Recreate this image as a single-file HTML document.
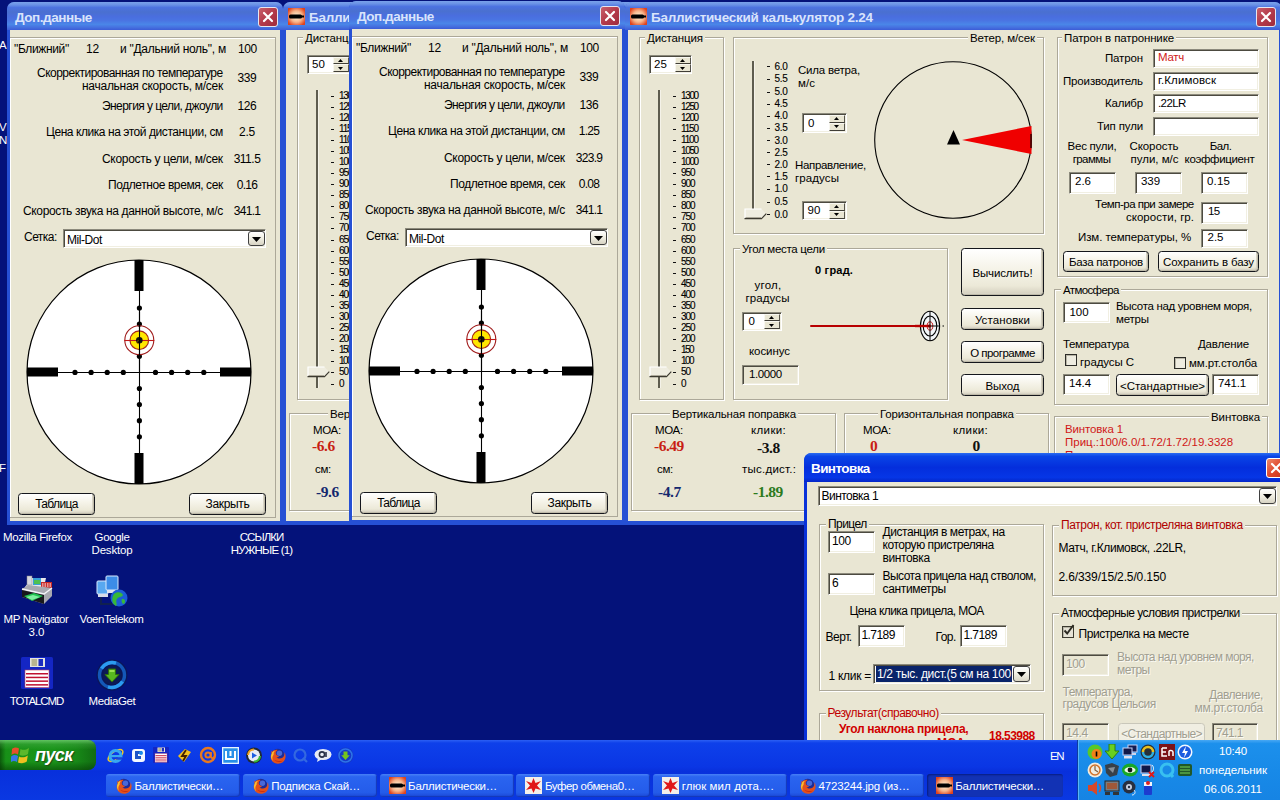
<!DOCTYPE html>
<html lang="ru"><head><meta charset="utf-8"><title>Баллистический калькулятор</title>
<style>
html,body{margin:0;padding:0;background:#04127a;}
#root{position:relative;width:1280px;height:800px;overflow:hidden;background:#04127a;font-family:"Liberation Sans",sans-serif;font-size:11px;color:#000;}
#root div,#root span.x,#root svg{position:absolute;box-sizing:border-box;}
span.x{white-space:nowrap;line-height:20px;height:20px;}
.t{font-size:11.5px;}              /* Tahoma 8pt look */
.tb{font-size:11px;font-weight:bold;}
.ms{font-size:12px;}             /* MS Sans Serif look */
.msb{font-size:12px;font-weight:bold;}
.tick{font-size:10px;font-weight:normal;color:#000;-webkit-text-stroke:0.12px #000;}
.ttl{font-size:13.5px;font-weight:bold;color:#d9e4fb;}
.ttla{font-size:13.5px;font-weight:bold;color:#fff;}
.ser{font-family:"Liberation Serif",serif;font-size:15.5px;font-weight:bold;}
.desk{font-size:11.5px;color:#fff;}
.tsk{font-size:11.5px;color:#fff;}
.start{font-size:18px;font-weight:bold;font-style:italic;color:#fff;text-shadow:1px 1px 1px #1c4a12;}
.winbg{background:#e9e6d3;}
.bord{background:#2650d4;}
.title{background:linear-gradient(to bottom,#7aa2ea 0%,#6a92e6 10%,#4c72e0 20%,#4a70d0 36%,#4a6ede 52%,#4a74e2 66%,#4a86e8 80%,#4672e0 90%,#3c5cd6 100%);border-radius:7px 7px 0 0;}
.titlea{background:linear-gradient(to bottom,#2a6cf2 0%,#0a44e6 12%,#042edc 50%,#0636e6 84%,#0426c8 100%);border-radius:7px 7px 0 0;}
.closei{background:linear-gradient(135deg,#c8606c,#b43a4a 50%,#a02c3c);border:1px solid #e6e6f0;border-radius:3px;}
.closea{background:linear-gradient(135deg,#ee8a6c,#e0482c 50%,#c83018);border:1px solid #fff;border-radius:3px;}
.grp{border:1px solid #aca899;box-shadow:1px 1px 0 #fff, inset 1px 1px 0 #fff;}
.glab{background:#e9e6d3;}
.tbx{background:#fff;border-top:1px solid #8c8a7c;border-left:1px solid #8c8a7c;border-right:1px solid #fff;border-bottom:1px solid #fff;box-shadow:inset 1px 1px 0 #4c4a40, inset -1px -1px 0 #f1efe2;}
.tbxd{background:#e9e6d3;border-top:1px solid #8c8a7c;border-left:1px solid #8c8a7c;border-right:1px solid #fff;border-bottom:1px solid #fff;box-shadow:inset 1px 1px 0 #4c4a40, inset -1px -1px 0 #f1efe2;}
.btn{border:1px solid #14161c;border-radius:3.5px;background:linear-gradient(to bottom,#ffffff 0%,#f6f4ea 40%,#ece9d8 80%,#d2cdbd 100%);box-shadow:inset -1px -1px 0 #bdb9a8, inset -2px -2px 0 #d8d4c6;}
.btnd{border:1px solid #c9c7ba;border-radius:3.5px;background:#f0eee2;}
.ddb{border:1px solid #404040;border-radius:3px;background:linear-gradient(to bottom,#ffffff 0%,#f0eee2 50%,#d8d4c4 100%);}
.chk{background:#eeece0;border:1px solid #2c2c28;box-shadow:inset 1px 1px 0 #b8b5a6;}
.frame3d{border:1px solid #aca899;box-shadow:inset 1px 1px 0 #fff;}
</style></head>
<body><div id="root">
<span id="t1" class="x desk" style="top:35px;left:-1px;">A</span>
<span id="t2" class="x desk" style="top:117px;left:-1px;">V</span>
<span id="t3" class="x desk" style="top:130px;left:-1px;">N</span>
<span id="t4" class="x desk" style="top:458px;left:-1px;">F</span>
<span id="t5" class="x desk" style="top:527px;left:3px;letter-spacing:-0.35px;">Mozilla Firefox</span>
<span id="t6" class="x desk" style="top:527px;left:-88.0px;width:400px;text-align:center;letter-spacing:-0.38px;">Google</span>
<span id="t7" class="x desk" style="top:540px;left:-88.0px;width:400px;text-align:center;letter-spacing:-0.18px;">Desktop</span>
<span id="t8" class="x desk" style="top:527px;left:61.5px;width:400px;text-align:center;letter-spacing:-0.97px;">ССЫЛКИ</span>
<span id="t9" class="x desk" style="top:540px;left:61.5px;width:400px;text-align:center;letter-spacing:-0.80px;">НУЖНЫЕ (1)</span>
<svg style="left:20px;top:575px" width="34" height="33" viewBox="0 0 34 33"><path d="M5 12 L12 3 L26 3 L24 12Z" fill="#e8e8ec"/><rect x="7" y="1" width="5" height="9" fill="#d8d8e0" stroke="#888" stroke-width=".5"/><rect x="13" y="3" width="8" height="7" fill="#38a0d8"/><rect x="14" y="5" width="6" height="4" fill="#50c050"/><rect x="21" y="7" width="11" height="6" fill="#c82828"/><path d="M22 9 H31 M22 11 H31" stroke="#fff" stroke-width="1" stroke-dasharray="1.5 1"/><path d="M2 14 L8 10 L32 13 L32 21 L24 29 L2 22Z" fill="#a8a8b0"/><path d="M2 14 L24 19 L32 13" fill="none" stroke="#f4f4f8" stroke-width="1.5"/><path d="M2 15 L24 20 L24 29 L2 22Z" fill="#18181c"/><path d="M4 21 L14 18 L23 21 L12 26Z" fill="#20c050"/><path d="M6 22 L13 20 L20 22 L12 25Z" fill="#80f0a0"/></svg>
<span id="t10" class="x desk" style="top:609px;left:-164.0px;width:400px;text-align:center;letter-spacing:-0.39px;">MP Navigator</span>
<span id="t11" class="x desk" style="top:622px;left:-163.5px;width:400px;text-align:center;">3.0</span>
<svg style="left:95px;top:575px" width="34" height="34" viewBox="0 0 34 34"><rect x="2" y="6" width="11" height="13" rx="1" fill="#58a8f0" stroke="#d8e8fc" stroke-width="1"/><rect x="3" y="19" width="10" height="3" fill="#d8dce8"/><rect x="11" y="1" width="12" height="14" rx="1" fill="#3c8ce8" stroke="#d8e8fc" stroke-width="1"/><rect x="12" y="15" width="10" height="3" fill="#e0e4f0"/><path d="M6 22 V29 H18" fill="none" stroke="#102050" stroke-width="2"/><circle cx="24" cy="23" r="8.5" fill="#1c5cd8"/><path d="M19 19 C22 16,27 17,28 20 C26 23,24 21,22 24 C20 27,23 29,21 31 C17 29,16 23,19 19Z" fill="#38b838"/><path d="M27 24 C30 24,31 26,29 29 C27 29,26 26,27 24Z" fill="#38b838"/></svg>
<span id="t12" class="x desk" style="top:609px;left:-88.5px;width:400px;text-align:center;letter-spacing:-0.48px;">VoenTelekom</span>
<svg style="left:21px;top:657px" width="32" height="32" viewBox="0 0 32 32"><rect x="0" y="0" width="32" height="32" rx="1.5" fill="#1426c4"/><rect x="9" y="1" width="15" height="9" fill="#e4e4dc"/><rect x="17.5" y="2" width="4.5" height="7" fill="#1c2cc0"/><rect x="10.5" y="2" width="5.5" height="7" fill="#b8b490"/><rect x="4" y="13" width="24" height="17.5" fill="#fff" stroke="#c04060" stroke-width="0.6"/><rect x="5" y="16" width="22" height="1.5" fill="#c01030"/><rect x="5" y="19.7" width="22" height="1.5" fill="#c01030"/><rect x="5" y="23.4" width="22" height="1.5" fill="#c01030"/><rect x="5" y="27.1" width="22" height="1.5" fill="#c01030"/></svg>
<span id="t13" class="x desk" style="top:691px;left:-163.5px;width:400px;text-align:center;letter-spacing:-1.09px;">TOTALCMD</span>
<svg style="left:96px;top:659px" width="32" height="32" viewBox="0 0 32 32"><circle cx="16" cy="16" r="15.5" fill="#0a1658"/><circle cx="16" cy="16" r="12.5" fill="none" stroke="#1458b8" stroke-width="3.4"/><path d="M5.5 9.5 A12.5 12.5 0 0 1 20 4.2" fill="none" stroke="#2c9cf0" stroke-width="3.4"/><path d="M26.5 22.5 A12.5 12.5 0 0 1 12 27.8" fill="none" stroke="#2c9cf0" stroke-width="3.4"/><circle cx="16" cy="16" r="9.5" fill="#0c1a54"/><path d="M12.5 10 H19.5 V15.5 H23 L16 23 L9 15.5 H12.5Z" fill="#58b820" stroke="#2c6c0c" stroke-width="1"/><path d="M13.5 11 H18.5 V13 H13.5Z" fill="#98e050"/></svg>
<span id="t14" class="x desk" style="top:691px;left:-88.0px;width:400px;text-align:center;letter-spacing:-0.38px;">MediaGet</span>
<div class="" style="left:7px;top:2px;width:276px;height:522.5px;background:#2650d4;border-radius:8px 8px 0 0;"></div>
<div class="title" style="left:7px;top:2px;width:276px;height:28px;"></div>
<div class="winbg" style="left:10px;top:29.5px;width:270px;height:491.0px;"></div>
<div class="closei" style="left:257.5px;top:6.5px;width:20.5px;height:20.5px;"><svg width="18" height="18" viewBox="0 0 18 18" style="left:0;top:0"><path d="M5 5 L13 13 M13 5 L5 13" stroke="#fff" stroke-width="2.2" stroke-linecap="round"/></svg></div>
<span id="t15" class="x ttl" style="top:8px;left:15px;letter-spacing:-0.46px;">Доп.данные</span>
<div class="frame3d" style="left:10px;top:37px;width:266px;height:480.5px;border-left:none;"></div>
<span id="t16" class="x ms" style="top:39px;left:14px;letter-spacing:-0.36px;">"Ближний"</span>
<span id="t17" class="x ms" style="top:39px;left:86px;letter-spacing:-0.24px;">12</span>
<span id="t18" class="x ms" style="top:39px;left:120px;letter-spacing:-0.28px;">и "Дальний ноль", м</span>
<span id="t19" class="x ms" style="top:39px;left:238px;letter-spacing:-0.41px;">100</span>
<span id="t20" class="x ms" style="top:63px;left:37px;letter-spacing:-0.52px;">Скорректированная по температуре</span>
<span id="t21" class="x ms" style="top:76px;left:82px;letter-spacing:-0.27px;">начальная скорость, м/сек</span>
<span id="t22" class="x ms" style="top:67.5px;left:47.0px;width:400px;text-align:center;letter-spacing:-0.41px;">339</span>
<span id="t23" class="x ms" style="top:96px;left:47.0px;width:400px;text-align:center;letter-spacing:-0.41px;">126</span>
<span id="t24" class="x ms" style="top:96px;left:102px;letter-spacing:-0.57px;">Энергия у цели, джоули</span>
<span id="t25" class="x ms" style="top:122px;left:47.0px;width:400px;text-align:center;letter-spacing:-0.28px;">2.5</span>
<span id="t26" class="x ms" style="top:122px;left:46px;letter-spacing:-0.44px;">Цена клика на этой дистанции, см</span>
<span id="t27" class="x ms" style="top:149px;left:47.0px;width:400px;text-align:center;letter-spacing:-0.48px;">311.5</span>
<span id="t28" class="x ms" style="top:149px;left:102px;letter-spacing:-0.30px;">Скорость у цели, м/сек</span>
<span id="t29" class="x ms" style="top:175px;left:47.0px;width:400px;text-align:center;letter-spacing:-0.67px;">0.16</span>
<span id="t30" class="x ms" style="top:175px;left:108px;letter-spacing:-0.42px;">Подлетное время, сек</span>
<span id="t31" class="x ms" style="top:201px;left:47.0px;width:400px;text-align:center;letter-spacing:-0.67px;">341.1</span>
<span id="t32" class="x ms" style="top:201px;left:23px;letter-spacing:-0.35px;">Скорость звука на данной высоте, м/с</span>
<span id="t33" class="x ms" style="top:227px;left:24px;letter-spacing:-0.54px;">Сетка:</span>
<div class="tbx" style="left:63px;top:229px;width:203px;height:19px;"></div>
<div class="ddb" style="left:248px;top:231px;width:17px;height:15px;"><svg width="9" height="5" style="left:3px;top:5px"><path d="M0 0 L9 0 L4.5 5Z" fill="#000"/></svg></div>
<span id="t34" class="x ms" style="top:229.5px;left:67px;letter-spacing:-0.46px;">Mil-Dot</span>
<svg style="left:25px;top:258px" width="228" height="228" viewBox="-114 -114 228 228"><circle r="112" fill="#fff" stroke="#000" stroke-width="1.2"/><path d="M-112 0.5 H112 M0.5 -112 V112" stroke="#000" stroke-width="1.1"/><rect x="-4.5" y="-112" width="9" height="31" fill="#000"/><rect x="-4.5" y="81" width="9" height="31" fill="#000"/><rect x="-112" y="-4.5" width="31" height="9" fill="#000"/><rect x="81" y="-4.5" width="31" height="9" fill="#000"/><circle cx="16.5" cy="0.4" r="2.6" fill="#000"/><circle cx="-15.700000000000001" cy="0.4" r="2.6" fill="#000"/><circle cx="0.4" cy="16.5" r="2.6" fill="#000"/><circle cx="0.4" cy="-15.700000000000001" r="2.6" fill="#000"/><circle cx="32.6" cy="0.4" r="2.6" fill="#000"/><circle cx="-31.800000000000004" cy="0.4" r="2.6" fill="#000"/><circle cx="0.4" cy="32.6" r="2.6" fill="#000"/><circle cx="0.4" cy="-31.800000000000004" r="2.6" fill="#000"/><circle cx="48.7" cy="0.4" r="2.6" fill="#000"/><circle cx="-47.900000000000006" cy="0.4" r="2.6" fill="#000"/><circle cx="0.4" cy="48.7" r="2.6" fill="#000"/><circle cx="0.4" cy="-47.900000000000006" r="2.6" fill="#000"/><circle cx="64.80000000000001" cy="0.4" r="2.6" fill="#000"/><circle cx="-64.0" cy="0.4" r="2.6" fill="#000"/><circle cx="0.4" cy="64.80000000000001" r="2.6" fill="#000"/><circle cx="0.4" cy="-64.0" r="2.6" fill="#000"/><g transform="translate(0.3,-31.8)"><circle r="14.5" fill="none" stroke="#a01c1c" stroke-width="1.1"/><circle r="9.3" fill="#ffe800" stroke="#a82818" stroke-width="1.2"/><path d="M-15 0.3 H15" stroke="#c01818" stroke-width="1.1"/><circle r="3.3" fill="#101010"/><circle cx="-1" cy="2" r="1.5" fill="none" stroke="#a06000" stroke-width="0.7"/></g><path d="M0.5 -60 V0" stroke="#000" stroke-width="1.1"/></svg>
<div class="btn" style="left:18px;top:492.5px;width:77px;height:22.5px;"></div>
<span id="t35" class="x ms" style="top:494.25px;left:-143.5px;width:400px;text-align:center;letter-spacing:-0.62px;">Таблица</span>
<div class="btn" style="left:189px;top:492.5px;width:77px;height:22.5px;"></div>
<span id="t36" class="x ms" style="top:494.25px;left:27.5px;width:400px;text-align:center;letter-spacing:-0.34px;">Закрыть</span>
<div class="" style="left:283px;top:2px;width:657px;height:522.5px;background:#2650d4;border-radius:8px 8px 0 0;"></div>
<div class="title" style="left:283px;top:2px;width:657px;height:28px;"></div>
<div class="winbg" style="left:286px;top:29.5px;width:651px;height:491.0px;"></div>
<svg style="left:288px;top:7.5px" width="17" height="17" viewBox="0 0 17 17"><defs><radialGradient id="ai" cx="50%" cy="50%" r="60%"><stop offset="0" stop-color="#fff4d8"/><stop offset="0.55" stop-color="#f6b48a"/><stop offset="1" stop-color="#e0421c"/></radialGradient></defs><rect width="17" height="17" fill="url(#ai)"/><rect x="1" y="6.5" width="13" height="4" rx="1.5" fill="#000"/><rect x="12" y="7.5" width="4" height="2" fill="#000"/></svg>
<div class="closei" style="left:913.5px;top:6.5px;width:20.5px;height:20.5px;"><svg width="18" height="18" viewBox="0 0 18 18" style="left:0;top:0"><path d="M5 5 L13 13 M13 5 L5 13" stroke="#fff" stroke-width="2.2" stroke-linecap="round"/></svg></div>
<span id="t37" class="x ttl" style="top:7.5px;left:309px;letter-spacing:-0.25px;">Баллистический калькулятор 2.24</span>
<div class="grp" style="left:297px;top:37px;width:85px;height:363px;"></div>
<div class="glab" style="left:303px;top:31px;width:60px;height:13px;"></div>
<span id="t38" class="x t" style="top:27.6px;left:305px;letter-spacing:-0.13px;">Дистанция</span>
<div class="tbx" style="left:306.5px;top:54.5px;width:43.5px;height:19.0px;"></div>
<div class="" style="left:332.5px;top:56.5px;width:16px;height:7.75px;background:#e9e6d3;border-top:1px solid #f8f7f0;border-left:1px solid #f8f7f0;border-right:1px solid #55534a;border-bottom:1.3px solid #403e36;"></div>
<svg style="left:337.5px;top:58.575px" width="5" height="3"><path d="M0 3 L2.5 0 L5 3Z" fill="#000"/></svg>
<div class="" style="left:332.5px;top:64.25px;width:16px;height:7.75px;background:#e9e6d3;border-top:1px solid #f8f7f0;border-left:1px solid #f8f7f0;border-right:1px solid #55534a;border-bottom:1.3px solid #403e36;"></div>
<svg style="left:337.5px;top:66.525px" width="5" height="3"><path d="M0 0 L2.5 3 L5 0Z" fill="#000"/></svg>
<span id="t39" class="x t" style="top:54.0px;left:312px;letter-spacing:0.14px;">50</span>
<div class="" style="left:316.3px;top:90px;width:3px;height:298px;background:#5e5c4e;border-right:1px solid #f4f2e8;"></div>
<div class="" style="left:331.29999999999995px;top:95.5px;width:3.2px;height:1.4px;background:#111;"></div>
<span id="t40" class="x tick" style="top:85.7px;left:339px;letter-spacing:-1.36px;">1300</span>
<div class="" style="left:331.29999999999995px;top:106.5px;width:3.2px;height:1.4px;background:#111;"></div>
<span id="t41" class="x tick" style="top:96.7px;left:339px;letter-spacing:-1.36px;">1250</span>
<div class="" style="left:331.29999999999995px;top:117.5px;width:3.2px;height:1.4px;background:#111;"></div>
<span id="t42" class="x tick" style="top:107.7px;left:339px;letter-spacing:-1.36px;">1200</span>
<div class="" style="left:331.29999999999995px;top:128.5px;width:3.2px;height:1.4px;background:#111;"></div>
<span id="t43" class="x tick" style="top:118.69999999999999px;left:339px;letter-spacing:-1.15px;">1150</span>
<div class="" style="left:331.29999999999995px;top:139.5px;width:3.2px;height:1.4px;background:#111;"></div>
<span id="t44" class="x tick" style="top:129.7px;left:339px;letter-spacing:-1.15px;">1100</span>
<div class="" style="left:331.29999999999995px;top:150.5px;width:3.2px;height:1.4px;background:#111;"></div>
<span id="t45" class="x tick" style="top:140.7px;left:339px;letter-spacing:-1.36px;">1050</span>
<div class="" style="left:331.29999999999995px;top:161.5px;width:3.2px;height:1.4px;background:#111;"></div>
<span id="t46" class="x tick" style="top:151.7px;left:339px;letter-spacing:-1.36px;">1000</span>
<div class="" style="left:331.29999999999995px;top:172.5px;width:3.2px;height:1.4px;background:#111;"></div>
<span id="t47" class="x tick" style="top:162.7px;left:339px;letter-spacing:-1.07px;">950</span>
<div class="" style="left:331.29999999999995px;top:183.5px;width:3.2px;height:1.4px;background:#111;"></div>
<span id="t48" class="x tick" style="top:173.7px;left:339px;letter-spacing:-1.07px;">900</span>
<div class="" style="left:331.29999999999995px;top:194.5px;width:3.2px;height:1.4px;background:#111;"></div>
<span id="t49" class="x tick" style="top:184.7px;left:339px;letter-spacing:-1.07px;">850</span>
<div class="" style="left:331.29999999999995px;top:205.5px;width:3.2px;height:1.4px;background:#111;"></div>
<span id="t50" class="x tick" style="top:195.7px;left:339px;letter-spacing:-1.07px;">800</span>
<div class="" style="left:331.29999999999995px;top:216.5px;width:3.2px;height:1.4px;background:#111;"></div>
<span id="t51" class="x tick" style="top:206.7px;left:339px;letter-spacing:-1.07px;">750</span>
<div class="" style="left:331.29999999999995px;top:227.5px;width:3.2px;height:1.4px;background:#111;"></div>
<span id="t52" class="x tick" style="top:217.7px;left:339px;letter-spacing:-1.07px;">700</span>
<div class="" style="left:331.29999999999995px;top:239.5px;width:3.2px;height:1.4px;background:#111;"></div>
<span id="t53" class="x tick" style="top:229.7px;left:339px;letter-spacing:-1.07px;">650</span>
<div class="" style="left:331.29999999999995px;top:250.5px;width:3.2px;height:1.4px;background:#111;"></div>
<span id="t54" class="x tick" style="top:240.7px;left:339px;letter-spacing:-1.07px;">600</span>
<div class="" style="left:331.29999999999995px;top:261.5px;width:3.2px;height:1.4px;background:#111;"></div>
<span id="t55" class="x tick" style="top:251.7px;left:339px;letter-spacing:-1.07px;">550</span>
<div class="" style="left:331.29999999999995px;top:272.5px;width:3.2px;height:1.4px;background:#111;"></div>
<span id="t56" class="x tick" style="top:262.7px;left:339px;letter-spacing:-1.07px;">500</span>
<div class="" style="left:331.29999999999995px;top:283.5px;width:3.2px;height:1.4px;background:#111;"></div>
<span id="t57" class="x tick" style="top:273.7px;left:339px;letter-spacing:-1.07px;">450</span>
<div class="" style="left:331.29999999999995px;top:294.5px;width:3.2px;height:1.4px;background:#111;"></div>
<span id="t58" class="x tick" style="top:284.7px;left:339px;letter-spacing:-1.07px;">400</span>
<div class="" style="left:331.29999999999995px;top:305.5px;width:3.2px;height:1.4px;background:#111;"></div>
<span id="t59" class="x tick" style="top:295.7px;left:339px;letter-spacing:-1.07px;">350</span>
<div class="" style="left:331.29999999999995px;top:316.5px;width:3.2px;height:1.4px;background:#111;"></div>
<span id="t60" class="x tick" style="top:306.7px;left:339px;letter-spacing:-1.07px;">300</span>
<div class="" style="left:331.29999999999995px;top:327.5px;width:3.2px;height:1.4px;background:#111;"></div>
<span id="t61" class="x tick" style="top:317.7px;left:339px;letter-spacing:-1.07px;">250</span>
<div class="" style="left:331.29999999999995px;top:338.5px;width:3.2px;height:1.4px;background:#111;"></div>
<span id="t62" class="x tick" style="top:328.7px;left:339px;letter-spacing:-1.07px;">200</span>
<div class="" style="left:331.29999999999995px;top:349.5px;width:3.2px;height:1.4px;background:#111;"></div>
<span id="t63" class="x tick" style="top:339.7px;left:339px;letter-spacing:-1.55px;">150</span>
<div class="" style="left:331.29999999999995px;top:360.5px;width:3.2px;height:1.4px;background:#111;"></div>
<span id="t64" class="x tick" style="top:350.7px;left:339px;letter-spacing:-1.55px;">100</span>
<div class="" style="left:331.29999999999995px;top:371.5px;width:3.2px;height:1.4px;background:#111;"></div>
<span id="t65" class="x tick" style="top:361.7px;left:339px;letter-spacing:-1.08px;">50</span>
<div class="" style="left:331.29999999999995px;top:383.5px;width:3.2px;height:1.4px;background:#111;"></div>
<span id="t66" class="x tick" style="top:374.0px;left:339px;">0</span>
<svg style="left:307px;top:365.5px" width="24" height="13" viewBox="0 0 24 13"><path d="M1 1 H17.5 L22 5.8 L17.5 10.5 H1 Z" fill="#efede0"/><path d="M1 10.5 V1 H17.5" fill="none" stroke="#fff" stroke-width="1.2"/><path d="M0.5 10.6 H17.5 L22.3 5.6" fill="none" stroke="#3c3a30" stroke-width="1.2"/><path d="M1.5 9.5 H17" fill="none" stroke="#aca899" stroke-width="1"/></svg>
<div class="grp" style="left:289px;top:413px;width:205px;height:98px;"></div>
<div class="glab" style="left:328px;top:407px;width:128px;height:13px;"></div>
<span id="t67" class="x t" style="top:403.6px;left:330px;letter-spacing:-0.19px;">Вертикальная поправка</span>
<span id="t68" class="x t" style="top:420px;left:313px;letter-spacing:-0.33px;">МОА:</span>
<span id="t69" class="x ser" style="top:436px;left:312px;letter-spacing:-0.44px;color:#c81e14;">-6.6</span>
<span id="t70" class="x t" style="top:459px;left:315px;letter-spacing:-0.34px;">см:</span>
<span id="t71" class="x ser" style="top:481.5px;left:316px;letter-spacing:-0.44px;color:#14286e;">-9.6</span>
<div class="" style="left:349px;top:1px;width:276px;height:522.5px;background:#2650d4;border-radius:8px 8px 0 0;"></div>
<div class="title" style="left:349px;top:1px;width:276px;height:28px;"></div>
<div class="winbg" style="left:352px;top:28.5px;width:270px;height:491.0px;"></div>
<div class="closei" style="left:599.5px;top:5.5px;width:20.5px;height:20.5px;"><svg width="18" height="18" viewBox="0 0 18 18" style="left:0;top:0"><path d="M5 5 L13 13 M13 5 L5 13" stroke="#fff" stroke-width="2.2" stroke-linecap="round"/></svg></div>
<span id="t72" class="x ttl" style="top:7px;left:357px;letter-spacing:-0.46px;">Доп.данные</span>
<div class="frame3d" style="left:352px;top:36px;width:266px;height:480.5px;border-left:none;"></div>
<span id="t73" class="x ms" style="top:38px;left:356px;letter-spacing:-0.36px;">"Ближний"</span>
<span id="t74" class="x ms" style="top:38px;left:428px;letter-spacing:-0.24px;">12</span>
<span id="t75" class="x ms" style="top:38px;left:462px;letter-spacing:-0.28px;">и "Дальний ноль", м</span>
<span id="t76" class="x ms" style="top:38px;left:580px;letter-spacing:-0.41px;">100</span>
<span id="t77" class="x ms" style="top:62px;left:379px;letter-spacing:-0.52px;">Скорректированная по температуре</span>
<span id="t78" class="x ms" style="top:75px;left:424px;letter-spacing:-0.27px;">начальная скорость, м/сек</span>
<span id="t79" class="x ms" style="top:66.5px;left:389.0px;width:400px;text-align:center;letter-spacing:-0.41px;">339</span>
<span id="t80" class="x ms" style="top:95px;left:389.0px;width:400px;text-align:center;letter-spacing:-0.41px;">136</span>
<span id="t81" class="x ms" style="top:95px;left:444px;letter-spacing:-0.57px;">Энергия у цели, джоули</span>
<span id="t82" class="x ms" style="top:121px;left:389.0px;width:400px;text-align:center;letter-spacing:-0.67px;">1.25</span>
<span id="t83" class="x ms" style="top:121px;left:388px;letter-spacing:-0.44px;">Цена клика на этой дистанции, см</span>
<span id="t84" class="x ms" style="top:148px;left:389.0px;width:400px;text-align:center;letter-spacing:-0.67px;">323.9</span>
<span id="t85" class="x ms" style="top:148px;left:444px;letter-spacing:-0.30px;">Скорость у цели, м/сек</span>
<span id="t86" class="x ms" style="top:174px;left:389.0px;width:400px;text-align:center;letter-spacing:-0.67px;">0.08</span>
<span id="t87" class="x ms" style="top:174px;left:450px;letter-spacing:-0.42px;">Подлетное время, сек</span>
<span id="t88" class="x ms" style="top:200px;left:389.0px;width:400px;text-align:center;letter-spacing:-0.67px;">341.1</span>
<span id="t89" class="x ms" style="top:200px;left:365px;letter-spacing:-0.35px;">Скорость звука на данной высоте, м/с</span>
<span id="t90" class="x ms" style="top:226px;left:366px;letter-spacing:-0.54px;">Сетка:</span>
<div class="tbx" style="left:405px;top:228px;width:203px;height:19px;"></div>
<div class="ddb" style="left:590px;top:230px;width:17px;height:15px;"><svg width="9" height="5" style="left:3px;top:5px"><path d="M0 0 L9 0 L4.5 5Z" fill="#000"/></svg></div>
<span id="t91" class="x ms" style="top:228.5px;left:409px;letter-spacing:-0.46px;">Mil-Dot</span>
<svg style="left:367px;top:257px" width="228" height="228" viewBox="-114 -114 228 228"><circle r="112" fill="#fff" stroke="#000" stroke-width="1.2"/><path d="M-112 0.5 H112 M0.5 -112 V112" stroke="#000" stroke-width="1.1"/><rect x="-4.5" y="-112" width="9" height="31" fill="#000"/><rect x="-4.5" y="81" width="9" height="31" fill="#000"/><rect x="-112" y="-4.5" width="31" height="9" fill="#000"/><rect x="81" y="-4.5" width="31" height="9" fill="#000"/><circle cx="16.5" cy="0.4" r="2.6" fill="#000"/><circle cx="-15.700000000000001" cy="0.4" r="2.6" fill="#000"/><circle cx="0.4" cy="16.5" r="2.6" fill="#000"/><circle cx="0.4" cy="-15.700000000000001" r="2.6" fill="#000"/><circle cx="32.6" cy="0.4" r="2.6" fill="#000"/><circle cx="-31.800000000000004" cy="0.4" r="2.6" fill="#000"/><circle cx="0.4" cy="32.6" r="2.6" fill="#000"/><circle cx="0.4" cy="-31.800000000000004" r="2.6" fill="#000"/><circle cx="48.7" cy="0.4" r="2.6" fill="#000"/><circle cx="-47.900000000000006" cy="0.4" r="2.6" fill="#000"/><circle cx="0.4" cy="48.7" r="2.6" fill="#000"/><circle cx="0.4" cy="-47.900000000000006" r="2.6" fill="#000"/><circle cx="64.80000000000001" cy="0.4" r="2.6" fill="#000"/><circle cx="-64.0" cy="0.4" r="2.6" fill="#000"/><circle cx="0.4" cy="64.80000000000001" r="2.6" fill="#000"/><circle cx="0.4" cy="-64.0" r="2.6" fill="#000"/><g transform="translate(0.3,-31.8)"><circle r="14.5" fill="none" stroke="#a01c1c" stroke-width="1.1"/><circle r="9.3" fill="#ffe800" stroke="#a82818" stroke-width="1.2"/><path d="M-15 0.3 H15" stroke="#c01818" stroke-width="1.1"/><circle r="3.3" fill="#101010"/><circle cx="-1" cy="2" r="1.5" fill="none" stroke="#a06000" stroke-width="0.7"/></g><path d="M0.5 -60 V0" stroke="#000" stroke-width="1.1"/></svg>
<div class="btn" style="left:360px;top:491.5px;width:77px;height:22.5px;"></div>
<span id="t92" class="x ms" style="top:493.25px;left:198.5px;width:400px;text-align:center;letter-spacing:-0.62px;">Таблица</span>
<div class="btn" style="left:531px;top:491.5px;width:77px;height:22.5px;"></div>
<span id="t93" class="x ms" style="top:493.25px;left:369.5px;width:400px;text-align:center;letter-spacing:-0.34px;">Закрыть</span>
<div class="" style="left:625px;top:2px;width:657px;height:522.5px;background:#2650d4;border-radius:8px 8px 0 0;"></div>
<div class="title" style="left:625px;top:2px;width:657px;height:28px;"></div>
<div class="winbg" style="left:628px;top:29.5px;width:651px;height:491.0px;"></div>
<svg style="left:630px;top:7.5px" width="17" height="17" viewBox="0 0 17 17"><defs><radialGradient id="ai" cx="50%" cy="50%" r="60%"><stop offset="0" stop-color="#fff4d8"/><stop offset="0.55" stop-color="#f6b48a"/><stop offset="1" stop-color="#e0421c"/></radialGradient></defs><rect width="17" height="17" fill="url(#ai)"/><rect x="1" y="6.5" width="13" height="4" rx="1.5" fill="#000"/><rect x="12" y="7.5" width="4" height="2" fill="#000"/></svg>
<div class="closei" style="left:1255.5px;top:6.5px;width:20.5px;height:20.5px;"><svg width="18" height="18" viewBox="0 0 18 18" style="left:0;top:0"><path d="M5 5 L13 13 M13 5 L5 13" stroke="#fff" stroke-width="2.2" stroke-linecap="round"/></svg></div>
<span id="t94" class="x ttl" style="top:7.5px;left:651px;letter-spacing:-0.25px;">Баллистический калькулятор 2.24</span>
<div class="grp" style="left:639px;top:37px;width:85px;height:363px;"></div>
<div class="glab" style="left:645px;top:31px;width:60px;height:13px;"></div>
<span id="t95" class="x t" style="top:27.6px;left:647px;letter-spacing:-0.13px;">Дистанция</span>
<div class="tbx" style="left:648.5px;top:54.5px;width:43.5px;height:19.0px;"></div>
<div class="" style="left:674.5px;top:56.5px;width:16px;height:7.75px;background:#e9e6d3;border-top:1px solid #f8f7f0;border-left:1px solid #f8f7f0;border-right:1px solid #55534a;border-bottom:1.3px solid #403e36;"></div>
<svg style="left:679.5px;top:58.575px" width="5" height="3"><path d="M0 3 L2.5 0 L5 3Z" fill="#000"/></svg>
<div class="" style="left:674.5px;top:64.25px;width:16px;height:7.75px;background:#e9e6d3;border-top:1px solid #f8f7f0;border-left:1px solid #f8f7f0;border-right:1px solid #55534a;border-bottom:1.3px solid #403e36;"></div>
<svg style="left:679.5px;top:66.525px" width="5" height="3"><path d="M0 0 L2.5 3 L5 0Z" fill="#000"/></svg>
<span id="t96" class="x t" style="top:54.0px;left:654px;letter-spacing:0.14px;">25</span>
<div class="" style="left:658.3px;top:90px;width:3px;height:298px;background:#5e5c4e;border-right:1px solid #f4f2e8;"></div>
<div class="" style="left:673.3px;top:95.5px;width:3.2px;height:1.4px;background:#111;"></div>
<span id="t97" class="x tick" style="top:85.7px;left:681px;letter-spacing:-1.36px;">1300</span>
<div class="" style="left:673.3px;top:106.5px;width:3.2px;height:1.4px;background:#111;"></div>
<span id="t98" class="x tick" style="top:96.7px;left:681px;letter-spacing:-1.36px;">1250</span>
<div class="" style="left:673.3px;top:117.5px;width:3.2px;height:1.4px;background:#111;"></div>
<span id="t99" class="x tick" style="top:107.7px;left:681px;letter-spacing:-1.36px;">1200</span>
<div class="" style="left:673.3px;top:128.5px;width:3.2px;height:1.4px;background:#111;"></div>
<span id="t100" class="x tick" style="top:118.69999999999999px;left:681px;letter-spacing:-1.15px;">1150</span>
<div class="" style="left:673.3px;top:139.5px;width:3.2px;height:1.4px;background:#111;"></div>
<span id="t101" class="x tick" style="top:129.7px;left:681px;letter-spacing:-1.15px;">1100</span>
<div class="" style="left:673.3px;top:150.5px;width:3.2px;height:1.4px;background:#111;"></div>
<span id="t102" class="x tick" style="top:140.7px;left:681px;letter-spacing:-1.36px;">1050</span>
<div class="" style="left:673.3px;top:161.5px;width:3.2px;height:1.4px;background:#111;"></div>
<span id="t103" class="x tick" style="top:151.7px;left:681px;letter-spacing:-1.36px;">1000</span>
<div class="" style="left:673.3px;top:172.5px;width:3.2px;height:1.4px;background:#111;"></div>
<span id="t104" class="x tick" style="top:162.7px;left:681px;letter-spacing:-1.07px;">950</span>
<div class="" style="left:673.3px;top:183.5px;width:3.2px;height:1.4px;background:#111;"></div>
<span id="t105" class="x tick" style="top:173.7px;left:681px;letter-spacing:-1.07px;">900</span>
<div class="" style="left:673.3px;top:194.5px;width:3.2px;height:1.4px;background:#111;"></div>
<span id="t106" class="x tick" style="top:184.7px;left:681px;letter-spacing:-1.07px;">850</span>
<div class="" style="left:673.3px;top:205.5px;width:3.2px;height:1.4px;background:#111;"></div>
<span id="t107" class="x tick" style="top:195.7px;left:681px;letter-spacing:-1.07px;">800</span>
<div class="" style="left:673.3px;top:216.5px;width:3.2px;height:1.4px;background:#111;"></div>
<span id="t108" class="x tick" style="top:206.7px;left:681px;letter-spacing:-1.07px;">750</span>
<div class="" style="left:673.3px;top:227.5px;width:3.2px;height:1.4px;background:#111;"></div>
<span id="t109" class="x tick" style="top:217.7px;left:681px;letter-spacing:-1.07px;">700</span>
<div class="" style="left:673.3px;top:239.5px;width:3.2px;height:1.4px;background:#111;"></div>
<span id="t110" class="x tick" style="top:229.7px;left:681px;letter-spacing:-1.07px;">650</span>
<div class="" style="left:673.3px;top:250.5px;width:3.2px;height:1.4px;background:#111;"></div>
<span id="t111" class="x tick" style="top:240.7px;left:681px;letter-spacing:-1.07px;">600</span>
<div class="" style="left:673.3px;top:261.5px;width:3.2px;height:1.4px;background:#111;"></div>
<span id="t112" class="x tick" style="top:251.7px;left:681px;letter-spacing:-1.07px;">550</span>
<div class="" style="left:673.3px;top:272.5px;width:3.2px;height:1.4px;background:#111;"></div>
<span id="t113" class="x tick" style="top:262.7px;left:681px;letter-spacing:-1.07px;">500</span>
<div class="" style="left:673.3px;top:283.5px;width:3.2px;height:1.4px;background:#111;"></div>
<span id="t114" class="x tick" style="top:273.7px;left:681px;letter-spacing:-1.07px;">450</span>
<div class="" style="left:673.3px;top:294.5px;width:3.2px;height:1.4px;background:#111;"></div>
<span id="t115" class="x tick" style="top:284.7px;left:681px;letter-spacing:-1.07px;">400</span>
<div class="" style="left:673.3px;top:305.5px;width:3.2px;height:1.4px;background:#111;"></div>
<span id="t116" class="x tick" style="top:295.7px;left:681px;letter-spacing:-1.07px;">350</span>
<div class="" style="left:673.3px;top:316.5px;width:3.2px;height:1.4px;background:#111;"></div>
<span id="t117" class="x tick" style="top:306.7px;left:681px;letter-spacing:-1.07px;">300</span>
<div class="" style="left:673.3px;top:327.5px;width:3.2px;height:1.4px;background:#111;"></div>
<span id="t118" class="x tick" style="top:317.7px;left:681px;letter-spacing:-1.07px;">250</span>
<div class="" style="left:673.3px;top:338.5px;width:3.2px;height:1.4px;background:#111;"></div>
<span id="t119" class="x tick" style="top:328.7px;left:681px;letter-spacing:-1.07px;">200</span>
<div class="" style="left:673.3px;top:349.5px;width:3.2px;height:1.4px;background:#111;"></div>
<span id="t120" class="x tick" style="top:339.7px;left:681px;letter-spacing:-1.56px;">150</span>
<div class="" style="left:673.3px;top:360.5px;width:3.2px;height:1.4px;background:#111;"></div>
<span id="t121" class="x tick" style="top:350.7px;left:681px;letter-spacing:-1.56px;">100</span>
<div class="" style="left:673.3px;top:371.5px;width:3.2px;height:1.4px;background:#111;"></div>
<span id="t122" class="x tick" style="top:361.7px;left:681px;letter-spacing:-1.08px;">50</span>
<div class="" style="left:673.3px;top:383.5px;width:3.2px;height:1.4px;background:#111;"></div>
<span id="t123" class="x tick" style="top:374.0px;left:681px;">0</span>
<svg style="left:649px;top:365.5px" width="24" height="13" viewBox="0 0 24 13"><path d="M1 1 H17.5 L22 5.8 L17.5 10.5 H1 Z" fill="#efede0"/><path d="M1 10.5 V1 H17.5" fill="none" stroke="#fff" stroke-width="1.2"/><path d="M0.5 10.6 H17.5 L22.3 5.6" fill="none" stroke="#3c3a30" stroke-width="1.2"/><path d="M1.5 9.5 H17" fill="none" stroke="#aca899" stroke-width="1"/></svg>
<div class="grp" style="left:631px;top:413px;width:205px;height:98px;"></div>
<div class="glab" style="left:670px;top:407px;width:128px;height:13px;"></div>
<span id="t124" class="x t" style="top:403.6px;left:672px;letter-spacing:-0.19px;">Вертикальная поправка</span>
<span id="t125" class="x t" style="top:420px;left:655px;letter-spacing:-0.33px;">МОА:</span>
<span id="t126" class="x ser" style="top:436px;left:654px;letter-spacing:-0.51px;color:#c81e14;">-6.49</span>
<span id="t127" class="x t" style="top:459px;left:657px;letter-spacing:-0.34px;">см:</span>
<span id="t128" class="x ser" style="top:481.5px;left:658px;letter-spacing:-0.44px;color:#14286e;">-4.7</span>
<span id="t129" class="x t" style="top:420px;left:751px;letter-spacing:0.37px;">клики:</span>
<span id="t130" class="x ser" style="top:438px;left:757px;letter-spacing:-0.44px;color:#101010;">-3.8</span>
<span id="t131" class="x t" style="top:458.5px;left:742px;letter-spacing:0.24px;">тыс.дист.:</span>
<span id="t132" class="x ser" style="top:481.5px;left:753px;letter-spacing:-0.51px;color:#2c7a1e;">-1.89</span>
<div class="grp" style="left:733px;top:37px;width:311px;height:197px;"></div>
<div class="glab" style="left:968px;top:31px;width:69px;height:13px;"></div>
<span id="t133" class="x t" style="top:27.6px;left:970px;letter-spacing:-0.11px;">Ветер, м/сек</span>
<div class="" style="left:752.3px;top:61px;width:3px;height:158px;background:#5e5c4e;border-right:1px solid #f4f2e8;"></div>
<div class="" style="left:767.3px;top:65.5px;width:3.2px;height:1.4px;background:#111;"></div>
<span id="t134" class="x tick" style="top:56.5px;left:774.5px;letter-spacing:-0.24px;">6.0</span>
<div class="" style="left:767.3px;top:78.5px;width:3.2px;height:1.4px;background:#111;"></div>
<span id="t135" class="x tick" style="top:69px;left:774.5px;letter-spacing:-0.24px;">5.5</span>
<div class="" style="left:767.3px;top:91.5px;width:3.2px;height:1.4px;background:#111;"></div>
<span id="t136" class="x tick" style="top:81.5px;left:774.5px;letter-spacing:-0.24px;">5.0</span>
<div class="" style="left:767.3px;top:103.5px;width:3.2px;height:1.4px;background:#111;"></div>
<span id="t137" class="x tick" style="top:93.5px;left:774.5px;letter-spacing:-0.24px;">4.5</span>
<div class="" style="left:767.3px;top:115.5px;width:3.2px;height:1.4px;background:#111;"></div>
<span id="t138" class="x tick" style="top:105.5px;left:774.5px;letter-spacing:-0.24px;">4.0</span>
<div class="" style="left:767.3px;top:127.5px;width:3.2px;height:1.4px;background:#111;"></div>
<span id="t139" class="x tick" style="top:118px;left:774.5px;letter-spacing:-0.24px;">3.5</span>
<div class="" style="left:767.3px;top:139.5px;width:3.2px;height:1.4px;background:#111;"></div>
<span id="t140" class="x tick" style="top:130.5px;left:774.5px;letter-spacing:-0.24px;">3.0</span>
<div class="" style="left:767.3px;top:151.5px;width:3.2px;height:1.4px;background:#111;"></div>
<span id="t141" class="x tick" style="top:142.5px;left:774.5px;letter-spacing:-0.24px;">2.5</span>
<div class="" style="left:767.3px;top:163.5px;width:3.2px;height:1.4px;background:#111;"></div>
<span id="t142" class="x tick" style="top:154.5px;left:774.5px;letter-spacing:-0.24px;">2.0</span>
<div class="" style="left:767.3px;top:175.5px;width:3.2px;height:1.4px;background:#111;"></div>
<span id="t143" class="x tick" style="top:166.5px;left:774.5px;letter-spacing:-0.24px;">1.5</span>
<div class="" style="left:767.3px;top:188.5px;width:3.2px;height:1.4px;background:#111;"></div>
<span id="t144" class="x tick" style="top:179px;left:774.5px;letter-spacing:-0.24px;">1.0</span>
<div class="" style="left:767.3px;top:201.5px;width:3.2px;height:1.4px;background:#111;"></div>
<span id="t145" class="x tick" style="top:191.5px;left:774.5px;letter-spacing:-0.24px;">0.5</span>
<div class="" style="left:767.3px;top:213.5px;width:3.2px;height:1.4px;background:#111;"></div>
<span id="t146" class="x tick" style="top:204.5px;left:774.5px;letter-spacing:-0.24px;">0.0</span>
<svg style="left:744px;top:208px" width="24" height="13" viewBox="0 0 24 13"><path d="M1 1 H17.5 L22 5.8 L17.5 10.5 H1 Z" fill="#efede0"/><path d="M1 10.5 V1 H17.5" fill="none" stroke="#fff" stroke-width="1.2"/><path d="M0.5 10.6 H17.5 L22.3 5.6" fill="none" stroke="#3c3a30" stroke-width="1.2"/><path d="M1.5 9.5 H17" fill="none" stroke="#aca899" stroke-width="1"/></svg>
<span id="t147" class="x t" style="top:60px;left:798px;letter-spacing:-0.22px;">Сила ветра,</span>
<span id="t148" class="x t" style="top:73px;left:798px;letter-spacing:0.06px;">м/с</span>
<div class="tbx" style="left:802px;top:113px;width:44.5px;height:19.5px;"></div>
<div class="" style="left:829.0px;top:115.0px;width:16px;height:8.0px;background:#e9e6d3;border-top:1px solid #f8f7f0;border-left:1px solid #f8f7f0;border-right:1px solid #55534a;border-bottom:1.3px solid #403e36;"></div>
<svg style="left:834.0px;top:117.2px" width="5" height="3"><path d="M0 3 L2.5 0 L5 3Z" fill="#000"/></svg>
<div class="" style="left:829.0px;top:123.0px;width:16px;height:8.0px;background:#e9e6d3;border-top:1px solid #f8f7f0;border-left:1px solid #f8f7f0;border-right:1px solid #55534a;border-bottom:1.3px solid #403e36;"></div>
<svg style="left:834.0px;top:125.4px" width="5" height="3"><path d="M0 0 L2.5 3 L5 0Z" fill="#000"/></svg>
<span id="t149" class="x t" style="top:112.75px;left:808px;">0</span>
<span id="t150" class="x t" style="top:155px;left:795px;letter-spacing:-0.35px;">Направление,</span>
<span id="t151" class="x t" style="top:168px;left:795px;letter-spacing:0.10px;">градусы</span>
<div class="tbx" style="left:802px;top:200.5px;width:44.5px;height:19.5px;"></div>
<div class="" style="left:829.0px;top:202.5px;width:16px;height:8.0px;background:#e9e6d3;border-top:1px solid #f8f7f0;border-left:1px solid #f8f7f0;border-right:1px solid #55534a;border-bottom:1.3px solid #403e36;"></div>
<svg style="left:834.0px;top:204.7px" width="5" height="3"><path d="M0 3 L2.5 0 L5 3Z" fill="#000"/></svg>
<div class="" style="left:829.0px;top:210.5px;width:16px;height:8.0px;background:#e9e6d3;border-top:1px solid #f8f7f0;border-left:1px solid #f8f7f0;border-right:1px solid #55534a;border-bottom:1.3px solid #403e36;"></div>
<svg style="left:834.0px;top:212.9px" width="5" height="3"><path d="M0 0 L2.5 3 L5 0Z" fill="#000"/></svg>
<span id="t152" class="x t" style="top:200.25px;left:807.5px;letter-spacing:0.14px;">90</span>
<svg style="left:872px;top:59px" width="162" height="162" viewBox="-81 -81 162 162"><circle r="78.3" fill="none" stroke="#000" stroke-width="1.1"/><path d="M9 0 L78.5 -14 L78.5 14 Z" fill="#f00000"/><path d="M78 -6 V8" stroke="#300" stroke-width="1.5"/><path d="M-6 4.5 L0.5 -10 L7 4.5 Z" fill="#000"/></svg>
<div class="grp" style="left:733px;top:248px;width:215px;height:152px;"></div>
<div class="glab" style="left:740px;top:242px;width:87px;height:13px;"></div>
<span id="t153" class="x t" style="top:238.6px;left:742px;letter-spacing:-0.29px;">Угол места цели</span>
<span id="t154" class="x tb" style="top:260px;left:815px;letter-spacing:0.21px;">0 град.</span>
<span id="t155" class="x t" style="top:275px;left:568.0px;width:400px;text-align:center;letter-spacing:0.28px;">угол,</span>
<span id="t156" class="x t" style="top:287.5px;left:567.5px;width:400px;text-align:center;letter-spacing:0.10px;">градусы</span>
<div class="tbx" style="left:742px;top:311.5px;width:39.5px;height:19.0px;"></div>
<div class="" style="left:764.0px;top:313.5px;width:16px;height:7.75px;background:#e9e6d3;border-top:1px solid #f8f7f0;border-left:1px solid #f8f7f0;border-right:1px solid #55534a;border-bottom:1.3px solid #403e36;"></div>
<svg style="left:769.0px;top:315.575px" width="5" height="3"><path d="M0 3 L2.5 0 L5 3Z" fill="#000"/></svg>
<div class="" style="left:764.0px;top:321.25px;width:16px;height:7.75px;background:#e9e6d3;border-top:1px solid #f8f7f0;border-left:1px solid #f8f7f0;border-right:1px solid #55534a;border-bottom:1.3px solid #403e36;"></div>
<svg style="left:769.0px;top:323.525px" width="5" height="3"><path d="M0 0 L2.5 3 L5 0Z" fill="#000"/></svg>
<span id="t157" class="x t" style="top:311.0px;left:748.5px;">0</span>
<span id="t158" class="x t" style="top:341px;left:749px;letter-spacing:-0.07px;">косинус</span>
<div class="tbxd" style="left:742px;top:365px;width:57px;height:20px;"></div>
<span id="t159" class="x t" style="top:364.2px;left:749px;letter-spacing:-0.40px;">1.0000</span>
<div class="" style="left:810px;top:324.7px;width:108px;height:2.4px;background:#b80000;border-radius:1px;"></div>
<svg style="left:914.8px;top:307.9px" width="30" height="36" viewBox="-15 -18 30 36"><ellipse rx="9.6" ry="14.8" fill="#f2f6f8" stroke="#000" stroke-width="1.1"/><ellipse rx="6.8" ry="10" fill="none" stroke="#000" stroke-width="1.1"/><ellipse rx="2.8" ry="4.2" fill="#fbeaea" stroke="#c02020" stroke-width="1"/><path d="M-9 0 H10 M12.5 0 H14 M0 -15 V15" stroke="#000" stroke-width="1"/><path d="M-15 0 H0.5" stroke="#b80000" stroke-width="2.4"/><circle cx="-0.5" r="1.6" fill="#700000"/></svg>
<div class="btn" style="left:961px;top:248px;width:83px;height:48px;"></div>
<span id="t160" class="x t" style="top:262.7px;left:802.5px;width:400px;text-align:center;letter-spacing:-0.18px;">Вычислить!</span>
<div class="btn" style="left:961px;top:308px;width:83px;height:22px;"></div>
<span id="t161" class="x t" style="top:309.7px;left:802.5px;width:400px;text-align:center;letter-spacing:0.10px;">Установки</span>
<div class="btn" style="left:961px;top:341px;width:83px;height:22px;"></div>
<span id="t162" class="x t" style="top:342.7px;left:802.5px;width:400px;text-align:center;letter-spacing:-0.51px;">О программе</span>
<div class="btn" style="left:961px;top:374px;width:83px;height:22px;"></div>
<span id="t163" class="x t" style="top:375.7px;left:802.5px;width:400px;text-align:center;letter-spacing:-0.09px;">Выход</span>
<div class="grp" style="left:844px;top:413px;width:205px;height:98px;"></div>
<div class="glab" style="left:878px;top:407px;width:138px;height:13px;"></div>
<span id="t164" class="x t" style="top:403.6px;left:880px;letter-spacing:-0.20px;">Горизонтальная поправка</span>
<span id="t165" class="x t" style="top:420px;left:863px;letter-spacing:-0.33px;">МОА:</span>
<span id="t166" class="x ser" style="top:436px;left:870px;color:#c81e14;">0</span>
<span id="t167" class="x t" style="top:420px;left:953px;letter-spacing:0.37px;">клики:</span>
<span id="t168" class="x ser" style="top:436px;left:972.5px;color:#101010;">0</span>
<div class="grp" style="left:1057px;top:37px;width:211px;height:240px;"></div>
<div class="glab" style="left:1062px;top:31px;width:114px;height:13px;"></div>
<span id="t169" class="x t" style="top:27.6px;left:1064px;letter-spacing:-0.13px;">Патрон в патроннике</span>
<span id="t170" class="x t" style="top:48px;left:1105px;letter-spacing:-0.15px;">Патрон</span>
<div class="tbx" style="left:1153px;top:48.5px;width:106px;height:19.0px;"></div>
<span id="t171" class="x t" style="top:47.2px;left:1158px;letter-spacing:-0.32px;color:#d01818;">Матч</span>
<span id="t172" class="x t" style="top:71px;left:1063px;letter-spacing:-0.15px;">Производитель</span>
<div class="tbx" style="left:1153px;top:71.5px;width:106px;height:19.0px;"></div>
<span id="t173" class="x t" style="top:70.2px;left:1158px;letter-spacing:0.12px;">г.Климовск</span>
<span id="t174" class="x t" style="top:93px;left:1105px;letter-spacing:-0.22px;">Калибр</span>
<div class="tbx" style="left:1153px;top:94px;width:106px;height:19px;"></div>
<span id="t175" class="x t" style="top:92.7px;left:1158px;letter-spacing:-0.60px;">.22LR</span>
<span id="t176" class="x t" style="top:116px;left:1097px;letter-spacing:-0.16px;">Тип пули</span>
<div class="tbx" style="left:1153px;top:117px;width:106px;height:19px;"></div>
<span id="t177" class="x t" style="top:136px;left:892.0px;width:400px;text-align:center;letter-spacing:-0.24px;">Вес пули,</span>
<span id="t178" class="x t" style="top:149px;left:891.5px;width:400px;text-align:center;letter-spacing:-0.56px;">граммы</span>
<span id="t179" class="x t" style="top:136px;left:954.0px;width:400px;text-align:center;letter-spacing:-0.09px;">Скорость</span>
<span id="t180" class="x t" style="top:149px;left:954.5px;width:400px;text-align:center;letter-spacing:-0.01px;">пули, м/с</span>
<span id="t181" class="x t" style="top:136px;left:1020.5px;width:400px;text-align:center;letter-spacing:-0.53px;">Бал.</span>
<span id="t182" class="x t" style="top:149px;left:1019.5px;width:400px;text-align:center;letter-spacing:-0.36px;">коэффициент</span>
<div class="tbx" style="left:1069px;top:171.5px;width:47px;height:22.0px;"></div>
<span id="t183" class="x t" style="top:170.7px;left:1075px;">2.6</span>
<div class="tbx" style="left:1135px;top:171.5px;width:47px;height:22.0px;"></div>
<span id="t184" class="x t" style="top:170.7px;left:1141px;letter-spacing:-0.07px;">339</span>
<div class="tbx" style="left:1201px;top:171.5px;width:47px;height:22.0px;"></div>
<span id="t185" class="x t" style="top:170.7px;left:1207px;letter-spacing:0.17px;">0.15</span>
<span id="t186" class="x t" style="top:194px;left:1095px;letter-spacing:-0.50px;">Темп-ра при замере</span>
<span id="t187" class="x t" style="top:207px;left:1126px;letter-spacing:0.02px;">скорости, гр.</span>
<div class="tbx" style="left:1201px;top:201.5px;width:47px;height:22.0px;"></div>
<span id="t188" class="x t" style="top:200.7px;left:1208px;letter-spacing:-0.53px;">15</span>
<span id="t189" class="x t" style="top:227px;left:1078px;letter-spacing:-0.09px;">Изм. температуры, %</span>
<div class="tbx" style="left:1201px;top:228.5px;width:47px;height:19.5px;"></div>
<span id="t190" class="x t" style="top:227.45px;left:1207.5px;">2.5</span>
<div class="btn" style="left:1063px;top:251px;width:86px;height:21px;"></div>
<span id="t191" class="x t" style="top:252.2px;left:906.0px;width:400px;text-align:center;letter-spacing:-0.32px;">База патронов</span>
<div class="btn" style="left:1158px;top:251px;width:101px;height:21px;"></div>
<span id="t192" class="x t" style="top:252.2px;left:1008.5px;width:400px;text-align:center;letter-spacing:-0.14px;">Сохранить в базу</span>
<div class="grp" style="left:1054px;top:289px;width:214px;height:116px;"></div>
<div class="glab" style="left:1061px;top:283px;width:60px;height:13px;"></div>
<span id="t193" class="x t" style="top:279.6px;left:1063px;letter-spacing:-0.63px;">Атмосфера</span>
<div class="tbx" style="left:1063px;top:301.5px;width:47px;height:21.5px;"></div>
<span id="t194" class="x t" style="top:301.65px;left:1069.5px;letter-spacing:-0.07px;">100</span>
<span id="t195" class="x t" style="top:296px;left:1116px;letter-spacing:-0.33px;">Высота над уровнем моря,</span>
<span id="t196" class="x t" style="top:308.5px;left:1116px;letter-spacing:-0.19px;">метры</span>
<span id="t197" class="x t" style="top:334px;left:1063px;letter-spacing:-0.35px;">Температура</span>
<span id="t198" class="x t" style="top:334px;left:1198px;letter-spacing:-0.17px;">Давление</span>
<div class="chk" style="left:1065px;top:354px;width:12px;height:12px;"></div>
<span id="t199" class="x t" style="top:352px;left:1080px;letter-spacing:-0.10px;">градусы С</span>
<div class="chk" style="left:1174px;top:356.5px;width:12px;height:12px;"></div>
<span id="t200" class="x t" style="top:353.4px;left:1189px;letter-spacing:-0.07px;">мм.рт.столба</span>
<div class="tbx" style="left:1063px;top:374px;width:47px;height:21px;"></div>
<span id="t201" class="x t" style="top:372.7px;left:1069px;letter-spacing:-0.11px;">14.4</span>
<div class="btn" style="left:1116px;top:374px;width:93px;height:22px;"></div>
<span id="t202" class="x t" style="top:375.7px;left:962.5px;width:400px;text-align:center;letter-spacing:-0.01px;">&lt;Стандартные&gt;</span>
<div class="tbx" style="left:1212px;top:374px;width:47px;height:21px;"></div>
<span id="t203" class="x t" style="top:372.7px;left:1218px;letter-spacing:-0.17px;">741.1</span>
<div class="grp" style="left:1054px;top:416px;width:214px;height:99px;"></div>
<div class="glab" style="left:1209px;top:410px;width:53px;height:13px;"></div>
<span id="t204" class="x t" style="top:406.6px;left:1211px;letter-spacing:-0.10px;">Винтовка</span>
<span id="t205" class="x t" style="top:419px;left:1065px;letter-spacing:-0.14px;color:#d01818;">Винтовка 1</span>
<span id="t206" class="x t" style="top:432px;left:1065px;letter-spacing:-0.01px;color:#d01818;">Приц.:100/6.0/1.72/1.72/19.3328</span>
<span id="t207" class="x t" style="top:445px;left:1065px;letter-spacing:-0.31px;color:#d01818;">Патрон:</span>
<div class="" style="left:804px;top:452.5px;width:491px;height:307.5px;background:#0831d9;border-radius:8px 8px 0 0;"></div>
<div class="titlea" style="left:804px;top:452.5px;width:491px;height:29.5px;"></div>
<div class="winbg" style="left:807px;top:481.5px;width:485px;height:274.5px;"></div>
<div class="closea" style="left:1266px;top:457.75px;width:20.5px;height:20.5px;"><svg width="18" height="18" viewBox="0 0 18 18" style="left:0;top:0"><path d="M5 5 L13 13 M13 5 L5 13" stroke="#fff" stroke-width="2.2" stroke-linecap="round"/></svg></div>
<span id="t208" class="x ttla" style="top:458.5px;left:811px;letter-spacing:-0.59px;">Винтовка</span>
<div class="tbx" style="left:818px;top:485.5px;width:459px;height:20.0px;"></div>
<div class="ddb" style="left:1259px;top:487.5px;width:17px;height:16.0px;"><svg width="9" height="5" style="left:3px;top:5px"><path d="M0 0 L9 0 L4.5 5Z" fill="#000"/></svg></div>
<span id="t209" class="x ms" style="top:485.5px;left:821.5px;letter-spacing:-0.52px;">Винтовка 1</span>
<div class="grp" style="left:819px;top:524px;width:225px;height:167px;"></div>
<div class="glab" style="left:826px;top:518px;width:43px;height:13px;"></div>
<span id="t210" class="x ms" style="top:514px;left:828px;letter-spacing:-0.55px;">Прицел</span>
<div class="tbx" style="left:828px;top:531px;width:47px;height:22px;"></div>
<span id="t211" class="x ms" style="top:530.5px;left:832px;letter-spacing:-0.41px;">100</span>
<span id="t212" class="x ms" style="top:521.5px;left:882.5px;letter-spacing:-0.44px;">Дистанция в метрах, на</span>
<span id="t213" class="x ms" style="top:534.5px;left:882.5px;letter-spacing:-0.45px;">которую пристреляна</span>
<span id="t214" class="x ms" style="top:547.5px;left:882.5px;letter-spacing:-0.38px;">винтовка</span>
<div class="tbx" style="left:828px;top:573px;width:47px;height:22px;"></div>
<span id="t215" class="x ms" style="top:572.5px;left:832px;">6</span>
<span id="t216" class="x ms" style="top:565.5px;left:882.5px;letter-spacing:-0.53px;">Высота прицела над стволом,</span>
<span id="t217" class="x ms" style="top:579px;left:882.5px;letter-spacing:-0.35px;">сантиметры</span>
<span id="t218" class="x ms" style="top:601px;left:849.5px;letter-spacing:-0.56px;">Цена клика прицела, МОА</span>
<span id="t219" class="x ms" style="top:627px;left:825.5px;letter-spacing:-0.47px;">Верт.</span>
<div class="tbx" style="left:858px;top:625px;width:47px;height:22px;"></div>
<span id="t220" class="x ms" style="top:624.5px;left:861.5px;letter-spacing:-0.58px;">1.7189</span>
<span id="t221" class="x ms" style="top:627px;left:935.5px;letter-spacing:-0.54px;">Гор.</span>
<div class="tbx" style="left:960px;top:625px;width:47px;height:22px;"></div>
<span id="t222" class="x ms" style="top:624.5px;left:963.5px;letter-spacing:-0.58px;">1.7189</span>
<span id="t223" class="x ms" style="top:666px;left:828.5px;letter-spacing:-0.29px;">1 клик =</span>
<div class="tbx" style="left:873px;top:664px;width:158px;height:20px;"></div>
<div class="" style="left:876px;top:666px;width:136px;height:16px;background:#0a246a;"></div>
<div class="ddb" style="left:1013px;top:666px;width:17px;height:16px;"><svg width="9" height="5" style="left:3px;top:5px"><path d="M0 0 L9 0 L4.5 5Z" fill="#000"/></svg></div>
<span id="t224" class="x ms" style="top:664.0px;left:877px;letter-spacing:-0.32px;color:#fff;">1/2 тыс. дист.(5 см на 100</span>
<div class="grp" style="left:819px;top:713px;width:225px;height:67px;"></div>
<div class="glab" style="left:825.5px;top:707px;width:115.5px;height:13px;"></div>
<span id="t225" class="x ms" style="top:703px;left:827.5px;letter-spacing:-0.47px;color:#c00000;">Результат(справочно)</span>
<span id="t226" class="x msb" style="top:719px;left:839px;letter-spacing:-0.30px;color:#d00000;">Угол наклона прицела,</span>
<span id="t227" class="x msb" style="top:733px;left:937px;letter-spacing:0.13px;color:#d00000;">МОА,</span>
<span id="t228" class="x msb" style="top:726px;left:989px;letter-spacing:-0.54px;color:#d00000;">18.53988</span>
<div class="grp" style="left:1052px;top:525px;width:225px;height:71px;"></div>
<div class="glab" style="left:1059px;top:519px;width:186px;height:13px;"></div>
<span id="t229" class="x ms" style="top:515px;left:1061px;letter-spacing:-0.39px;color:#b00000;">Патрон, кот. пристреляна винтовка</span>
<span id="t230" class="x ms" style="top:538px;left:1058.5px;letter-spacing:-0.38px;">Матч, г.Климовск, .22LR,</span>
<span id="t231" class="x ms" style="top:567px;left:1058.5px;letter-spacing:-0.13px;">2.6/339/15/2.5/0.150</span>
<div class="grp" style="left:1052px;top:613px;width:225px;height:167px;"></div>
<div class="glab" style="left:1059px;top:607px;width:183px;height:13px;"></div>
<span id="t232" class="x ms" style="top:603px;left:1061px;letter-spacing:-0.53px;">Атмосферные условия пристрелки</span>
<div class="chk" style="left:1062px;top:626px;width:12px;height:12px;border-width:1.5px;border-color:#3c3a30;background:#e6e3d6;"></div>
<svg width="16" height="16" style="left:1061px;top:622px"><path d="M3.5 8.5 L6.2 11.5 L12.5 3" fill="none" stroke="#2c2a22" stroke-width="1.9"/></svg>
<span id="t233" class="x ms" style="top:624px;left:1078.5px;letter-spacing:-0.44px;">Пристрелка на месте</span>
<div class="tbxd" style="left:1062px;top:654px;width:47px;height:22px;"></div>
<span id="t234" class="x ms" style="top:653.5px;left:1066px;letter-spacing:-0.41px;color:#a09e90;text-shadow:1px 1px 0 #fbfaf4;">100</span>
<span id="t235" class="x ms" style="top:647px;left:1117px;letter-spacing:-0.55px;color:#a09e90;text-shadow:1px 1px 0 #fbfaf4;">Высота над уровнем моря,</span>
<span id="t236" class="x ms" style="top:660px;left:1117px;letter-spacing:-0.52px;color:#a09e90;text-shadow:1px 1px 0 #fbfaf4;">метры</span>
<span id="t237" class="x ms" style="top:681.5px;left:1062.5px;letter-spacing:-0.48px;color:#a09e90;text-shadow:1px 1px 0 #fbfaf4;">Температура,</span>
<span id="t238" class="x ms" style="top:694px;left:1062.5px;letter-spacing:-0.47px;color:#a09e90;text-shadow:1px 1px 0 #fbfaf4;">градусов Цельсия</span>
<span id="t239" class="x ms" style="top:685px;left:1209px;letter-spacing:-0.46px;color:#a09e90;text-shadow:1px 1px 0 #fbfaf4;">Давление,</span>
<span id="t240" class="x ms" style="top:698px;left:1194.5px;letter-spacing:-0.29px;color:#a09e90;text-shadow:1px 1px 0 #fbfaf4;">мм.рт.столба</span>
<div class="tbxd" style="left:1062px;top:723px;width:47px;height:22px;"></div>
<span id="t241" class="x ms" style="top:722.5px;left:1066px;letter-spacing:-0.39px;color:#a09e90;text-shadow:1px 1px 0 #fbfaf4;">14.4</span>
<div class="btnd" style="left:1118px;top:723px;width:87px;height:22px;"></div>
<span id="t242" class="x ms" style="top:723.5px;left:961.5px;width:400px;text-align:center;letter-spacing:-0.63px;color:#a09e90;text-shadow:1px 1px 0 #fbfaf4;">&lt;Стандартные&gt;</span>
<div class="tbxd" style="left:1212px;top:723px;width:46px;height:22px;"></div>
<span id="t243" class="x ms" style="top:722.5px;left:1216px;letter-spacing:-0.67px;color:#a09e90;text-shadow:1px 1px 0 #fbfaf4;">741.1</span>
<div class="" style="left:0px;top:739.5px;width:1280px;height:60.5px;background:linear-gradient(to bottom,#2c60f4 0%,#0e40ea 5%,#0a36e4 45%,#0830dc 52%,#0a38e2 100%);"></div>
<div class="" style="left:0px;top:740px;width:96px;height:30px;background:linear-gradient(to right,#0c5a0c 0%,#189018 6%,#1a941a 55%,#178817 80%,#126c12 100%);border-radius:0 8px 8px 0;"></div>
<div class="" style="left:0px;top:740px;width:96px;height:30px;background:linear-gradient(to bottom,rgba(120,210,120,0.75) 0%,rgba(80,180,80,0.35) 14%,rgba(0,0,0,0) 32%,rgba(0,0,0,0) 72%,rgba(0,40,0,0.45) 100%);border-radius:0 8px 8px 0;"></div>
<svg style="left:11px;top:746px" width="19" height="18" viewBox="0 0 19 18"><path d="M1 3 C3 1,6 1,8 2.5 L7 8.5 C5 7,2.5 7,0.5 9Z" fill="#e8502c"/><path d="M9.5 3 C12 4.5,15 4,18 2 L17 8 C14.5 10,11 10,8.5 9Z" fill="#5cb82c"/><path d="M0.2 10.5 C2 8.5,5 8.5,7 10 L6 16 C4 14.5,1.5 14.5,-0.5 16.5Z" fill="#3878e8"/><path d="M8 10.5 C10.5 12,14 11.5,16.8 9.5 L15.8 15.5 C13 17.5,9.5 17.5,7 16.5Z" fill="#f0c020"/></svg>
<span id="t244" class="x start" style="top:744.5px;left:35px;letter-spacing:-0.61px;">пуск</span>
<svg style="left:107px;top:747px" width="17" height="17" viewBox="0 0 17 17"><ellipse cx="8.5" cy="8.5" rx="8.5" ry="4" fill="none" stroke="#f0c828" stroke-width="1.5" transform="rotate(-35 8.5 8.5)"/><circle cx="8.5" cy="9" r="5.5" fill="none" stroke="#38a8f0" stroke-width="3"/><rect x="4" y="8" width="10" height="2.2" fill="#38a8f0"/><rect x="9" y="10.2" width="6" height="2.5" fill="#1846dc"/></svg>
<svg style="left:130px;top:747px" width="17" height="17" viewBox="0 0 17 17"><rect x="2" y="2" width="13" height="13" rx="3" fill="#f4f8ff"/><path d="M5 4 H12 V7 H8 V9 H11 V12 H5Z" fill="#1c54c8"/><circle cx="11" cy="6" r="2" fill="#1c8ce8"/></svg>
<svg style="left:153px;top:747px" width="16" height="16" viewBox="0 0 32 32"><rect x="0" y="0" width="32" height="32" rx="1.5" fill="#1426c4"/><rect x="9" y="1" width="15" height="9" fill="#e4e4dc"/><rect x="17.5" y="2" width="4.5" height="7" fill="#1c2cc0"/><rect x="10.5" y="2" width="5.5" height="7" fill="#b8b490"/><rect x="4" y="13" width="24" height="17.5" fill="#fff" stroke="#c04060" stroke-width="0.6"/><rect x="5" y="16" width="22" height="1.5" fill="#c01030"/><rect x="5" y="19.7" width="22" height="1.5" fill="#c01030"/><rect x="5" y="23.4" width="22" height="1.5" fill="#c01030"/><rect x="5" y="27.1" width="22" height="1.5" fill="#c01030"/></svg>
<svg style="left:176px;top:747px" width="17" height="17" viewBox="0 0 17 17"><path d="M2 9 L9 2 L15 5 L8 15Z" fill="#f0c020"/><path d="M10 3 L6 9 H10 L7 14" fill="none" stroke="#402000" stroke-width="1.8"/></svg>
<svg style="left:199px;top:746px" width="18" height="18" viewBox="0 0 18 18"><circle cx="9" cy="9" r="7" fill="none" stroke="#e87820" stroke-width="2.4"/><circle cx="9" cy="9" r="2.6" fill="none" stroke="#e87820" stroke-width="2"/><path d="M12 6 V11 C12 13,16 12,16 9" fill="none" stroke="#e87820" stroke-width="1.8"/></svg>
<svg style="left:222px;top:747px" width="17" height="17" viewBox="0 0 17 17"><rect x="0.5" y="0.5" width="16" height="16" fill="#2890e8" stroke="#e8f4ff" stroke-width="1.6"/><path d="M4 4 V12 H13 V4 M8.5 4 V9" fill="none" stroke="#fff" stroke-width="2"/></svg>
<svg style="left:245px;top:747px" width="18" height="17" viewBox="0 0 18 17"><circle cx="9" cy="8.5" r="8" fill="#202838"/><circle cx="9" cy="8.5" r="6" fill="#e8ecf4"/><path d="M3 8 A6 6 0 0 1 9 2.5" stroke="#f0a020" stroke-width="2.2" fill="none"/><path d="M9 14.5 A6 6 0 0 0 15 9" stroke="#38b838" stroke-width="2.2" fill="none"/><path d="M7 5.5 L12 8.5 L7 11.5Z" fill="#1c5ce0"/></svg>
<svg style="left:269px;top:747px" width="17" height="17" viewBox="0 0 16 16"><circle cx="8.3" cy="7.6" r="6" fill="#1c2c98"/><circle cx="9.8" cy="5.8" r="2.6" fill="#4868d8"/><path d="M2.2 3.2 C1.8 4.5,2 5.2,2.6 6 C1 8,1.2 11.5,3.5 13.8 C6 16.2,10.5 16.3,13.2 14 C16 11.5,16.2 7.5,14.6 5 C14.8 7.5,14 9.3,12.6 10.2 C10.8 11.4,8.2 11,7 9.6 C8.2 9.8,9 9.2,9.4 8.4 C8 8.4,6.6 7.6,6.4 6.2 C6.2 4.8,7 3.6,8.2 2.8 C6 2.4,4 3,2.9 4.6 C2.5 4.2,2.3 3.8,2.2 3.2Z" fill="#e4501a"/><path d="M2.6 6 C1.4 8,1.6 11,3.6 13.2 C2.8 11,3 8.6,4.4 7 C4.2 5.8,4.8 4.6,5.8 3.6 C4.6 3.8,3.6 4.4,2.9 5.2Z" fill="#f8c030"/><path d="M5 12 C7 14.6,11 14.8,13.2 12.6 C11 13.6,7.5 13.4,5 12Z" fill="#c83010"/></svg>
<svg style="left:292px;top:747px" width="17" height="17" viewBox="0 0 17 17"><circle cx="8" cy="8" r="5.5" fill="none" stroke="#3468e0" stroke-width="2.2"/><path d="M11 11 L15 15" stroke="#3468e0" stroke-width="2.2"/></svg>
<svg style="left:314px;top:748px" width="18" height="15" viewBox="0 0 18 15"><ellipse cx="9" cy="6.5" rx="8.5" ry="5.5" fill="#e8ecf4"/><path d="M4 10 L3 14 L8 11Z" fill="#e8ecf4"/><circle cx="8" cy="6.5" r="2.6" fill="none" stroke="#283048" stroke-width="1.6"/><path d="M12 4 V9" stroke="#283048" stroke-width="1.6"/></svg>
<svg style="left:337px;top:747px" width="17" height="17" viewBox="0 0 17 17"><circle cx="8.5" cy="8.5" r="8" fill="#1638c8"/><circle cx="8.5" cy="8.5" r="6.5" fill="none" stroke="#2c74e8" stroke-width="1.5"/><path d="M6.5 4.5 H10.5 V8.2 H12.8 L8.5 13 L4.2 8.2 H6.5Z" fill="#74c41c"/></svg>
<div class="" style="left:106px;top:774px;width:134px;height:23px;background:linear-gradient(to bottom,#4880f6 0%,#2a64f0 12%,#245cea 80%,#1a48d6 100%);border-radius:3px;box-shadow:inset -1px -1px 1px #1438b8;"></div>
<svg style="left:115px;top:777px" width="17" height="17" viewBox="0 0 16 16"><circle cx="8.3" cy="7.6" r="6" fill="#1c2c98"/><circle cx="9.8" cy="5.8" r="2.6" fill="#4868d8"/><path d="M2.2 3.2 C1.8 4.5,2 5.2,2.6 6 C1 8,1.2 11.5,3.5 13.8 C6 16.2,10.5 16.3,13.2 14 C16 11.5,16.2 7.5,14.6 5 C14.8 7.5,14 9.3,12.6 10.2 C10.8 11.4,8.2 11,7 9.6 C8.2 9.8,9 9.2,9.4 8.4 C8 8.4,6.6 7.6,6.4 6.2 C6.2 4.8,7 3.6,8.2 2.8 C6 2.4,4 3,2.9 4.6 C2.5 4.2,2.3 3.8,2.2 3.2Z" fill="#e4501a"/><path d="M2.6 6 C1.4 8,1.6 11,3.6 13.2 C2.8 11,3 8.6,4.4 7 C4.2 5.8,4.8 4.6,5.8 3.6 C4.6 3.8,3.6 4.4,2.9 5.2Z" fill="#f8c030"/><path d="M5 12 C7 14.6,11 14.8,13.2 12.6 C11 13.6,7.5 13.4,5 12Z" fill="#c83010"/></svg>
<span id="t245" class="x tsk" style="top:775.5px;left:134.5px;letter-spacing:-0.25px;">Баллистически…</span>
<div class="" style="left:242.8px;top:774px;width:134px;height:23px;background:linear-gradient(to bottom,#4880f6 0%,#2a64f0 12%,#245cea 80%,#1a48d6 100%);border-radius:3px;box-shadow:inset -1px -1px 1px #1438b8;"></div>
<svg style="left:251.8px;top:777px" width="17" height="17" viewBox="0 0 16 16"><circle cx="8.3" cy="7.6" r="6" fill="#1c2c98"/><circle cx="9.8" cy="5.8" r="2.6" fill="#4868d8"/><path d="M2.2 3.2 C1.8 4.5,2 5.2,2.6 6 C1 8,1.2 11.5,3.5 13.8 C6 16.2,10.5 16.3,13.2 14 C16 11.5,16.2 7.5,14.6 5 C14.8 7.5,14 9.3,12.6 10.2 C10.8 11.4,8.2 11,7 9.6 C8.2 9.8,9 9.2,9.4 8.4 C8 8.4,6.6 7.6,6.4 6.2 C6.2 4.8,7 3.6,8.2 2.8 C6 2.4,4 3,2.9 4.6 C2.5 4.2,2.3 3.8,2.2 3.2Z" fill="#e4501a"/><path d="M2.6 6 C1.4 8,1.6 11,3.6 13.2 C2.8 11,3 8.6,4.4 7 C4.2 5.8,4.8 4.6,5.8 3.6 C4.6 3.8,3.6 4.4,2.9 5.2Z" fill="#f8c030"/><path d="M5 12 C7 14.6,11 14.8,13.2 12.6 C11 13.6,7.5 13.4,5 12Z" fill="#c83010"/></svg>
<span id="t246" class="x tsk" style="top:775.5px;left:271.3px;letter-spacing:-0.25px;">Подписка Скай…</span>
<div class="" style="left:379.6px;top:774px;width:134px;height:23px;background:linear-gradient(to bottom,#4880f6 0%,#2a64f0 12%,#245cea 80%,#1a48d6 100%);border-radius:3px;box-shadow:inset -1px -1px 1px #1438b8;"></div>
<svg style="left:388.6px;top:777px" width="17" height="17" viewBox="0 0 17 17"><defs><radialGradient id="ai" cx="50%" cy="50%" r="60%"><stop offset="0" stop-color="#fff4d8"/><stop offset="0.55" stop-color="#f6b48a"/><stop offset="1" stop-color="#e0421c"/></radialGradient></defs><rect width="17" height="17" fill="url(#ai)"/><rect x="1" y="6.5" width="13" height="4" rx="1.5" fill="#000"/><rect x="12" y="7.5" width="4" height="2" fill="#000"/></svg>
<span id="t247" class="x tsk" style="top:775.5px;left:408.1px;letter-spacing:-0.25px;">Баллистически…</span>
<div class="" style="left:516.4px;top:774px;width:134px;height:23px;background:linear-gradient(to bottom,#4880f6 0%,#2a64f0 12%,#245cea 80%,#1a48d6 100%);border-radius:3px;box-shadow:inset -1px -1px 1px #1438b8;"></div>
<svg style="left:525.4px;top:777px" width="17" height="17" viewBox="0 0 17 17"><rect width="17" height="17" fill="#f4f0ea"/><path d="M8.5 1 L10.5 6 L16 4 L12 8.5 L16 13 L10.5 11.5 L8.5 16 L6.5 11.5 L1 13 L5 8.5 L1 4 L6.5 6Z" fill="#e01818"/></svg>
<span id="t248" class="x tsk" style="top:775.5px;left:544.9px;letter-spacing:-0.45px;">Буфер обмена0…</span>
<div class="" style="left:653.2px;top:774px;width:134px;height:23px;background:linear-gradient(to bottom,#4880f6 0%,#2a64f0 12%,#245cea 80%,#1a48d6 100%);border-radius:3px;box-shadow:inset -1px -1px 1px #1438b8;"></div>
<svg style="left:662.2px;top:777px" width="17" height="17" viewBox="0 0 17 17"><rect width="17" height="17" fill="#f4f0ea"/><path d="M8.5 1 L10.5 6 L16 4 L12 8.5 L16 13 L10.5 11.5 L8.5 16 L6.5 11.5 L1 13 L5 8.5 L1 4 L6.5 6Z" fill="#e01818"/></svg>
<span id="t249" class="x tsk" style="top:775.5px;left:681.7px;letter-spacing:0.08px;">глюк мил дота….</span>
<div class="" style="left:790px;top:774px;width:134px;height:23px;background:linear-gradient(to bottom,#4880f6 0%,#2a64f0 12%,#245cea 80%,#1a48d6 100%);border-radius:3px;box-shadow:inset -1px -1px 1px #1438b8;"></div>
<svg style="left:799px;top:777px" width="17" height="17" viewBox="0 0 16 16"><circle cx="8.3" cy="7.6" r="6" fill="#1c2c98"/><circle cx="9.8" cy="5.8" r="2.6" fill="#4868d8"/><path d="M2.2 3.2 C1.8 4.5,2 5.2,2.6 6 C1 8,1.2 11.5,3.5 13.8 C6 16.2,10.5 16.3,13.2 14 C16 11.5,16.2 7.5,14.6 5 C14.8 7.5,14 9.3,12.6 10.2 C10.8 11.4,8.2 11,7 9.6 C8.2 9.8,9 9.2,9.4 8.4 C8 8.4,6.6 7.6,6.4 6.2 C6.2 4.8,7 3.6,8.2 2.8 C6 2.4,4 3,2.9 4.6 C2.5 4.2,2.3 3.8,2.2 3.2Z" fill="#e4501a"/><path d="M2.6 6 C1.4 8,1.6 11,3.6 13.2 C2.8 11,3 8.6,4.4 7 C4.2 5.8,4.8 4.6,5.8 3.6 C4.6 3.8,3.6 4.4,2.9 5.2Z" fill="#f8c030"/><path d="M5 12 C7 14.6,11 14.8,13.2 12.6 C11 13.6,7.5 13.4,5 12Z" fill="#c83010"/></svg>
<span id="t250" class="x tsk" style="top:775.5px;left:818.5px;letter-spacing:-0.16px;">4723244.jpg (из…</span>
<div class="" style="left:926.8px;top:774px;width:136px;height:23px;background:#1232b4;border-radius:3px;box-shadow:inset 1px 1px 2px #081c80;"></div>
<svg style="left:935.8px;top:777px" width="17" height="17" viewBox="0 0 17 17"><defs><radialGradient id="ai" cx="50%" cy="50%" r="60%"><stop offset="0" stop-color="#fff4d8"/><stop offset="0.55" stop-color="#f6b48a"/><stop offset="1" stop-color="#e0421c"/></radialGradient></defs><rect width="17" height="17" fill="url(#ai)"/><rect x="1" y="6.5" width="13" height="4" rx="1.5" fill="#000"/><rect x="12" y="7.5" width="4" height="2" fill="#000"/></svg>
<span id="t251" class="x tsk" style="top:775.5px;left:955.3px;letter-spacing:-0.25px;">Баллистически…</span>
<span id="t252" class="x tsk" style="top:746px;left:1050px;letter-spacing:-1.32px;">EN</span>
<div class="" style="left:1077px;top:739.5px;width:203px;height:60.5px;background:linear-gradient(to bottom,#48a8f4 0%,#1c90ec 6%,#188ae8 50%,#1684e4 100%);border-left:1px solid #0c3ca0;box-shadow:inset 1px 0 0 #58b4f8;"></div>
<svg style="left:1087px;top:744px" width="16" height="16" viewBox="0 0 16 16"><circle cx="8" cy="8" r="7.5" fill="#58c828"/><circle cx="9.5" cy="10" r="5" fill="#f08018"/><path d="M9.5 7.5 V12.5" stroke="#000" stroke-width="1.6"/></svg>
<svg style="left:1104px;top:744px" width="16" height="16" viewBox="0 0 16 16"><path d="M5 0 H11 V7 H15 L8 15 L1 7 H5Z" fill="#68d020" stroke="#2c8010" stroke-width="1"/></svg>
<svg style="left:1122px;top:744px" width="16" height="16" viewBox="0 0 16 16"><rect x="6" y="1" width="9" height="7" fill="#141c50" stroke="#c8d4f8"/><rect x="7" y="9" width="7" height="2" fill="#d0d4e8"/><rect x="1" y="4" width="9" height="7" fill="#101848" stroke="#c8d4f8"/><rect x="2" y="12" width="8" height="2.5" fill="#e0e0ec"/></svg>
<svg style="left:1140px;top:744px" width="16" height="16" viewBox="0 0 16 16"><circle cx="8" cy="8" r="7.5" fill="#283038"/><path d="M3 8 A5 5 0 0 1 13 8" stroke="#e8c020" stroke-width="2.5" fill="none"/><path d="M13 8 A5 5 0 0 1 3 8" stroke="#30b0e0" stroke-width="2.5" fill="none"/></svg>
<svg style="left:1159px;top:744px" width="16" height="16" viewBox="0 0 16 16"><rect width="16" height="16" fill="#7c1418"/><path d="M3 4 H8 M3 4 V12 H8 M3 8 H7" stroke="#fff" stroke-width="1.5" fill="none"/><path d="M10 12 V7.5 C10 6,14 6,14 8 V12" stroke="#fff" stroke-width="1.5" fill="none"/></svg>
<svg style="left:1177px;top:744px" width="16" height="16" viewBox="0 0 16 16"><circle cx="8" cy="8" r="7.5" fill="#f4f8ff"/><circle cx="8" cy="8" r="6" fill="#1c5ce0"/><path d="M9 2 L5 9 H8 L7 14 L11 7 H8Z" fill="#fff"/></svg>
<svg style="left:1087px;top:762px" width="16" height="16" viewBox="0 0 16 16"><circle cx="8" cy="8" r="7.5" fill="#f0ece0"/><circle cx="8" cy="8" r="5" fill="none" stroke="#d07028" stroke-width="1.5"/><path d="M8 4 V8 L11 10" stroke="#806040" stroke-width="1.2" fill="none"/></svg>
<svg style="left:1104px;top:762px" width="16" height="16" viewBox="0 0 16 16"><path d="M1 3 L8 1 L15 4 L13 13 L6 15 L2 11Z" fill="#384048"/><path d="M4 6 L11 5 L9 11Z" fill="#889098"/></svg>
<svg style="left:1122px;top:762px" width="16" height="16" viewBox="0 0 16 16"><ellipse cx="8" cy="8" rx="8" ry="6.5" fill="#18a828"/><ellipse cx="8" cy="8" rx="5.5" ry="3" fill="#e8f8e8"/><circle cx="8" cy="8" r="2.4" fill="#101810"/></svg>
<svg style="left:1140px;top:762px" width="16" height="16" viewBox="0 0 16 16"><rect x="1" y="3" width="10" height="8" fill="#101848" stroke="#c8d4f8"/><rect x="2" y="12" width="9" height="2" fill="#e0e0ec"/><path d="M12 3 C14 5,14 8,12 10" stroke="#fff" fill="none"/><path d="M9 10 L14 15 M14 10 L9 15" stroke="#e01818" stroke-width="1.8"/></svg>
<svg style="left:1159px;top:762px" width="16" height="16" viewBox="0 0 16 16"><circle cx="8" cy="8" r="6" fill="none" stroke="#38c0f0" stroke-width="3"/><path d="M11 11 L14 15" stroke="#38c0f0" stroke-width="3"/></svg>
<svg style="left:1177px;top:762px" width="16" height="16" viewBox="0 0 16 16"><rect x="1" y="2" width="14" height="12" rx="2" fill="#205828"/><path d="M3 5 H13 M3 8 H13 M3 11 H13" stroke="#58a848" stroke-width="1.5"/></svg>
<svg style="left:1087px;top:780px" width="16" height="16" viewBox="0 0 16 16"><path d="M1 5 H5 L10 1 V15 L5 11 H1Z" fill="#d84828"/><path d="M12 4 C14 6,14 10,12 12" stroke="#d84828" stroke-width="1.5" fill="none"/></svg>
<svg style="left:1104px;top:780px" width="16" height="16" viewBox="0 0 16 16"><rect x="1" y="1" width="14" height="10" fill="#787c80" stroke="#202428"/><rect x="3" y="3" width="10" height="6" fill="#a05838"/><rect x="1" y="12" width="5" height="3" fill="#303438"/><rect x="9" y="12" width="6" height="3" fill="#303438"/></svg>
<svg style="left:1122px;top:780px" width="16" height="16" viewBox="0 0 16 16"><circle cx="7" cy="7" r="6.5" fill="#283040"/><circle cx="7" cy="7" r="3" fill="#c8d0e0"/><circle cx="7" cy="7" r="1.2" fill="#283040"/><path d="M12 10 C14 12,13 15,10 15" stroke="#e8ecf4" fill="none"/></svg>
<svg style="left:1140px;top:780px" width="16" height="16" viewBox="0 0 16 16"><rect x="4" y="5" width="8" height="10" rx="1" fill="#1c3cd0"/><rect x="4" y="2" width="8" height="4" fill="#f4f4f8"/><circle cx="8" cy="3" r="2" fill="#e02020"/></svg>
<span id="t253" class="x tsk" style="top:741px;left:1219px;letter-spacing:-0.17px;">10:40</span>
<span id="t254" class="x tsk" style="top:760px;left:1199px;letter-spacing:-0.03px;">понедельник</span>
<span id="t255" class="x tsk" style="top:779px;left:1204px;letter-spacing:0.14px;">06.06.2011</span>
</div></body></html>
